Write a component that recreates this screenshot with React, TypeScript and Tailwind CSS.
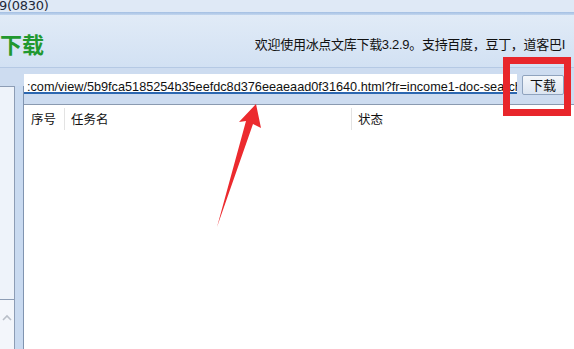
import React from "react";

const F = "font-['Liberation_Sans','Noto_Sans_CJK_SC',sans-serif]";

export default function App() {
  return (
    <div className={`relative w-[574px] h-[349px] overflow-hidden bg-white ${F}`}>
      {/* title strip */}
      <div className="h-[12px] bg-[#dfe9f6] flex items-start">
        <span className="text-[13px] leading-[12px] text-[#1e2a3a] -ml-[1px] font-['DejaVu_Sans',sans-serif] tracking-[-0.3px]">9(0830)</span>
      </div>
      <div className="h-[3px] bg-gradient-to-b from-[#a3bfe3] to-[#c3d6ee]" />
      {/* header */}
      <div className="h-[52px] bg-gradient-to-b from-[#e1ebf7] to-[#d2e1f3] flex items-start justify-between">
        <div className="pt-[15px] text-[22px] leading-[26px] font-bold text-[#21982f] font-['Noto_Sans_CJK_SC',sans-serif]">下载</div>
        <div className="pt-[22px] pr-[9px] text-[13px] leading-[16px] text-[#111] tracking-[-0.3px]">欢迎使用冰点文库下载3.2.9。支持百度，豆丁，道客巴I</div>
      </div>
      <div className="h-px bg-[#b5c9e4]" />
      {/* body */}
      <div className="flex h-[281px]">
        {/* left column */}
        <div className="w-[24px] flex flex-col bg-[#cddcf0]">
          <div className="h-[18px]" />
          <div className="flex flex-1">
            <div className="w-[15px] flex flex-col border-t border-r border-[#8d9db5]">
              <div className="h-[213px] bg-[#eef3fa] border-b border-[#8d9db5]" />
              <div className="flex-1 bg-[#f3f6fb] flex justify-center pt-[14px]">
                <svg width="10" height="7" viewBox="0 0 10 7">
                  <path d="M1 6 L5 2 L9 6" fill="none" stroke="#b9bfc8" strokeWidth="1.6" />
                </svg>
              </div>
            </div>
            <div className="flex-1 bg-[#c9daf0] border-r border-[#8094b0]" />
          </div>
        </div>
        {/* right column */}
        <div className="flex-1 flex flex-col">
          <div className="h-[36px] bg-[#cddcf0] flex items-start pt-[6px]">
            <div className="w-[493px] h-[20px] bg-white border-b-2 border-[#2c67b0] overflow-hidden whitespace-nowrap pl-[3px]">
              <span className="text-[12.7px] leading-[19px] text-[#111] font-['Liberation_Sans',sans-serif]">:com/view/5b9fca5185254b35eefdc8d376eeaeaad0f31640.html?fr=income1-doc-search</span>
            </div>
            <button className="ml-[5px] mt-[1px] w-[42px] h-[20px] border border-[#8fa3be] rounded-[2px] bg-gradient-to-b from-[#f4f7fb] to-[#dce5f1] text-[13px] leading-[16px] text-[#111] font-['Noto_Sans_CJK_SC',sans-serif]">下载</button>
          </div>
          <div className="flex-1 bg-white border-t border-[#8a9ab0]">
            <div className="flex h-[28px] items-center text-[12.5px] leading-[14px] text-[#111] font-['Noto_Sans_CJK_SC',sans-serif]">
              <div className="w-[41px] pl-[7px] border-r border-[#e3e3e3] h-[22px] flex items-center">序号</div>
              <div className="w-[287px] pl-[6px] border-r border-[#e3e3e3] h-[22px] flex items-center">任务名</div>
              <div className="pl-[6px]">状态</div>
            </div>
          </div>
        </div>
      </div>

      {/* red highlight box */}
      <div className="absolute left-[503px] top-[57px] w-[68px] h-[59px] border-[7px] border-[#e8262b]" />
      {/* red arrow */}
      <svg className="absolute left-0 top-0" width="574" height="349" viewBox="0 0 574 349">
        <polygon
          points="256,104 261,128 253,124 217,227 246,121 239,122"
          fill="#ec2a2e"
        />
      </svg>
    </div>
  );
}
